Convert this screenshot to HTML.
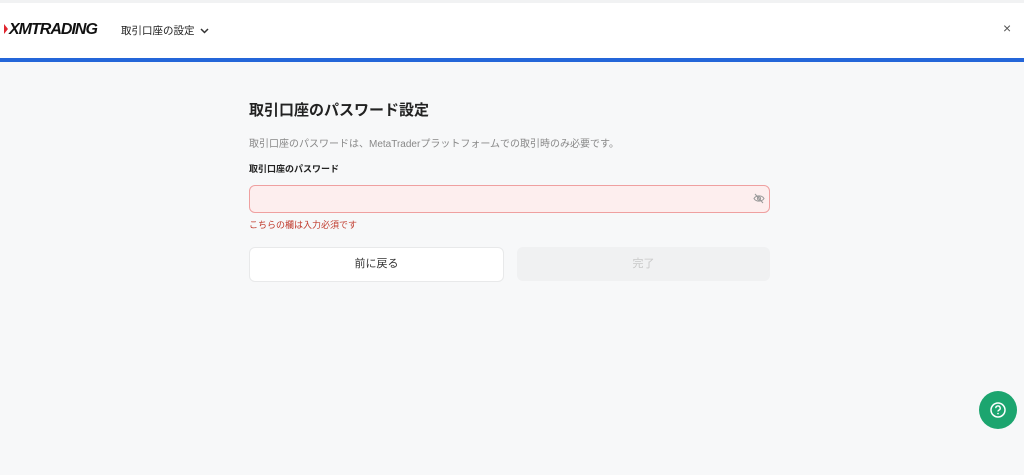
<!DOCTYPE html>
<html><head><meta charset="utf-8"><style>
body{margin:0;width:1024px;height:475px;background:#f7f8f9;font-family:"Liberation Sans","Noto Sans CJK JP",sans-serif;position:relative;overflow:hidden}
.hdr{position:absolute;left:0;top:3px;width:1024px;height:55px;background:#fff}
.topband{position:absolute;left:0;top:0;width:1024px;height:3px;background:#f1f2f3}
.blue{position:absolute;left:0;top:58px;width:1024px;height:4px;background:#2466d9}
.logo{position:absolute;left:4px;top:21px;font-weight:bold;font-style:italic;font-size:16px;letter-spacing:-1px;color:#111}
.logo:before{content:"";display:inline-block;width:0;height:0;border-left:4px solid #e0262f;border-top:5px solid transparent;border-bottom:5px solid transparent;margin-right:1px}
.menu{position:absolute;left:121px;top:23px;font-size:10.5px;color:#222}
.x{position:absolute;left:1003px;top:20px;font-size:14px;color:#555}
.abs{position:absolute}
</style></head><body>
<div class="topband"></div>
<div class="hdr"></div>
<div class="blue"></div>
<div class="logo">XMTRADING</div>
<div class="menu">取引口座の設定 <svg width="9" height="6" viewBox="0 0 9 6" style="margin-left:3px"><path d="M1 1l3.5 3.5L8 1" stroke="#333" stroke-width="1.5" fill="none"/></svg></div>
<div class="x">×</div>
<div class="abs" style="left:249px;top:99px;font-size:15px;font-weight:bold;color:#222">取引口座のパスワード設定</div>
<div class="abs" style="left:249px;top:135px;font-size:10px;color:#888">取引口座のパスワードは、MetaTraderプラットフォームでの取引時のみ必要です。</div>
<div class="abs" style="left:249px;top:162px;font-size:9px;font-weight:bold;color:#222">取引口座のパスワード</div>
<div class="abs" style="left:249px;top:185px;width:519px;height:26px;background:#fdeeee;border:1px solid #efa0a0;border-radius:6px"></div>
<svg class="abs" style="left:753px;top:193px" width="12" height="11" viewBox="0 0 12 11"><path d="M1 5.5C3 2 9 2 11 5.5C9 9 3 9 1 5.5Z" stroke="#999" fill="none"/><circle cx="6" cy="5.5" r="1.6" stroke="#999" fill="none"/><path d="M2 1l8 9" stroke="#999"/></svg>
<div class="abs" style="left:249px;top:218px;font-size:9px;color:#c0392b">こちらの欄は入力必須です</div>
<div class="abs" style="left:249px;top:247px;width:253px;height:33px;background:#fff;border:1px solid #e8e9ea;border-radius:6px;text-align:center;line-height:33px;font-size:11px;color:#333">前に戻る</div>
<div class="abs" style="left:517px;top:247px;width:253px;height:34px;background:#f0f1f2;border-radius:6px;text-align:center;line-height:34px;font-size:11px;color:#c8c8c8">完了</div>
<div class="abs" style="left:979px;top:391px;width:38px;height:38px;border-radius:50%;background:#1ca56f"></div>
<svg class="abs" style="left:989px;top:401px" width="18" height="18" viewBox="0 0 18 18"><circle cx="9" cy="9" r="7" stroke="#fff" stroke-width="1.5" fill="none"/><path d="M6.8 7.2a2.2 2.2 0 1 1 3 2c-.6.3-.8.7-.8 1.3" stroke="#fff" stroke-width="1.4" fill="none"/><circle cx="9" cy="12.6" r=".8" fill="#fff"/></svg>
</body></html>
